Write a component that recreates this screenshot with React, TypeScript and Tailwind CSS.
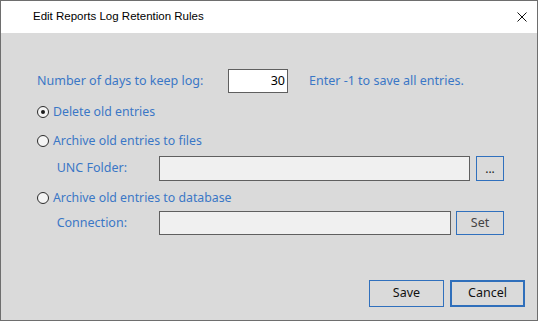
import React from "react";

const font = { fontFamily: '"Noto Sans", "Segoe UI", sans-serif' };

function Radio({ checked, label }: { checked?: boolean; label: string }) {
  return (
    <div className="flex h-[20px] items-center pl-[36px]">
      <span className="flex h-[12px] w-[12px] items-center justify-center rounded-full border border-[#2b2b2b] bg-[#f4f4f4]">
        {checked && <span className="h-[4px] w-[4px] rounded-full bg-[#1a1a1a]" />}
      </span>
      <span className="ml-[4px] text-[12.3px] text-[#3a77c6]">{label}</span>
    </div>
  );
}

export default function App() {
  return (
    <div className="h-[322px] w-[539px] bg-white" style={font}>
      <div className="flex h-[321px] w-[538px] flex-col border border-[#6e6e6e]">
        <div className="flex h-[32px] shrink-0 items-center justify-between bg-white pl-[32px] pr-[5px]">
          <span className="font-['Liberation_Sans',sans-serif] text-[11.5px] text-black">Edit Reports Log Retention Rules</span>
          <svg width="10" height="10" viewBox="0 0 10 10" className="mr-[5px]">
            <path d="M0.5 0.5 L9.5 9.5 M9.5 0.5 L0.5 9.5" stroke="#111" strokeWidth="1" />
          </svg>
        </div>
        <div className="flex flex-1 flex-col bg-[#dadada]">
          <div className="mt-[36px] flex h-[24px] items-center pl-[36px]">
            <span className="w-[191px] text-[12.5px] text-[#3a77c6]">Number of days to keep log:</span>
            <div className="flex h-[24px] w-[60px] items-center justify-end border border-[#5f5f5f] bg-white pr-[2px] text-[12.5px] text-black">
              30
            </div>
            <span className="ml-[21px] text-[12.5px] text-[#3a77c6]">Enter -1 to save all entries.</span>
          </div>
          <div className="mt-[9px]">
            <Radio checked label="Delete old entries" />
          </div>
          <div className="mt-[9px]">
            <Radio label="Archive old entries to files" />
          </div>
          <div className="mt-[5px] flex h-[25px] items-center">
            <span className="w-[126px] pr-0 text-right text-[12.5px] text-[#3a77c6]">UNC Folder:</span>
            <div className="ml-[32px] h-[25px] w-[311px] border border-[#5f5f5f] bg-[#f0f0f0]" />
            <div className="ml-[6px] flex h-[25px] w-[28px] items-center justify-center border border-[#3070bd] text-[12px] text-[#222]">
              ...
            </div>
          </div>
          <div className="mt-[7px]">
            <Radio label="Archive old entries to database" />
          </div>
          <div className="mt-[3px] flex h-[24px] items-center">
            <span className="w-[126px] text-right text-[12.5px] text-[#3a77c6]">Connection:</span>
            <div className="ml-[32px] h-[24px] w-[292px] border border-[#5f5f5f] bg-[#f0f0f0]" />
            <div className="ml-[5px] flex h-[24px] w-[48px] items-center justify-center border border-[#3070bd] text-[12.5px] text-[#444]">
              Set
            </div>
          </div>
          <div className="mt-[45px] flex h-[27px] justify-end pr-[12px]">
            <div className="flex h-[27px] w-[75px] items-center justify-center border border-[#3070bd] text-[12.5px] text-[#111]">
              Save
            </div>
            <div className="ml-[6px] flex h-[27px] w-[75px] items-center justify-center border-2 border-[#2f6fbb] text-[12.5px] text-[#111]">
              Cancel
            </div>
          </div>
        </div>
      </div>
    </div>
  );
}
